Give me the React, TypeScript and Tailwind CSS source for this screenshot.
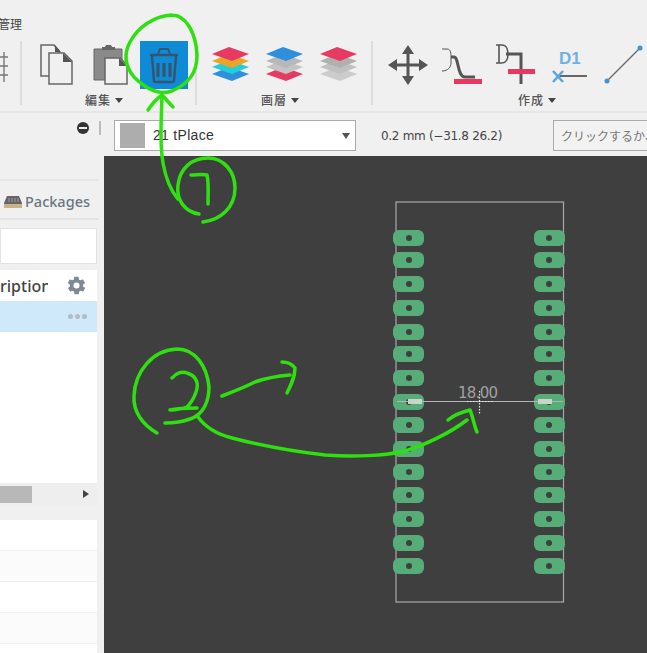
const GREEN = "#2ee00f"

const padRows = [238, 260, 284, 308, 332, 354, 378, 402, 425, 449, 472, 495, 519, 543, 566]

function Caret() {
  return <span className="ml-1 inline-block w-0 h-0 border-x-[4px] border-x-transparent border-t-[5px] border-t-[#444] align-middle" />
}

function RibbonLabel({ text, pl }: { text: string; pl: string }) {
  return (
    <div className={`${pl} flex items-center h-[22px] text-[12px] font-medium tracking-[1px] text-[#555]`}>
      {text}
      <Caret />
    </div>
  )
}

function Copy() {
  return (
    <svg width="34" height="42" viewBox="40 44 34 42" className="ml-[18px]">
      <path d="M41 45h13l5 6v25H41z" fill="#f0f0f0" stroke="#666" strokeWidth="1.5" />
      <path d="M55 45l6 7h-6z" fill="#555" />
      <path d="M49 53h15l8 8v23H49z" fill="#f0f0f0" stroke="#666" strokeWidth="1.5" />
      <path d="M63 53l9 9h-9z" fill="#555" />
    </svg>
  )
}

function Paste() {
  return (
    <svg width="36" height="42" viewBox="93 44 36 42" className="ml-[19px]">
      <path d="M94 49h28v31H94z" fill="#8a8a8a" stroke="#666" />
      <path d="M102 50v-3h3l1-2h5l1 2h3v3z" fill="#666" />
      <path d="M105 58h15l7 7v19h-22z" fill="#f0f0f0" stroke="#666" strokeWidth="1.5" />
      <path d="M119 58l8 8h-8z" fill="#555" />
    </svg>
  )
}

function Trash() {
  return (
    <div className="ml-[11px] w-[48px] h-[48px] bg-[#0f8bd6] flex items-center justify-center">
      <svg width="32" height="38" viewBox="148 45 32 38">
        <g stroke="#35546f" fill="none" strokeWidth="2">
          <path d="M150 54h28" strokeWidth="2.5" />
          <path d="M158 53l2-5h8l2 5" />
          <path d="M152 55l2 25a2 2 0 0 0 2 1h16a2 2 0 0 0 2-1l2-25" strokeWidth="2.5" />
          <path d="M158 62v14M164 62v14M170 62v14" strokeWidth="3" />
        </g>
      </svg>
    </div>
  )
}

function LayerStack({ colors, ml }: { colors: string[]; ml: string }) {
  // drawn bottom first, top layer is the first colour
  const offs = [0, 7, 13, 20]
  return (
    <svg width="40" height="40" viewBox="0 0 40 40" className={ml}>
      {colors.map((_, i) => {
        const j = colors.length - 1 - i
        const y = offs[j]
        return <path key={j} d={`M1 ${y + 9}L18 ${y + 2}L38 ${y + 9}L21 ${y + 16}z`} fill={colors[j]} />
      })}
    </svg>
  )
}

function Move() {
  return (
    <svg width="42" height="42" viewBox="386 44 42 42" className="ml-[14px]">
      <path d="M407 49v32M391 65h32" stroke="#555" strokeWidth="3" />
      <path d="M407 45l6 9h-12zM407 85l6-9h-12zM387 65l9-6v12zM427 65l-9-6v12z" fill="#555" />
    </svg>
  )
}

function Fanout() {
  return (
    <svg width="44" height="44" viewBox="439 44 44 44" className="ml-[11px]">
      <path d="M441 50h5c4 0 4 5 4 8v6c0 4-3 8-9 8" fill="none" stroke="#555" strokeWidth="1" />
      <path d="M450 58h3c5 0 3 20 11 20h10" fill="none" stroke="#555" strokeWidth="3" />
      <rect x="453" y="80" width="28" height="5" fill="#e8385f" />
    </svg>
  )
}

function DimBend() {
  return (
    <svg width="44" height="44" viewBox="493 44 44 44" className="ml-[10px]">
      <path d="M495 46h6c4 0 6 4 6 9s-2 9-6 9h-6M498 46v18" fill="none" stroke="#555" strokeWidth="1.6" />
      <path d="M505 55h15v30" fill="none" stroke="#555" strokeWidth="3" />
      <rect x="507" y="70" width="27" height="5" fill="#e8385f" />
    </svg>
  )
}

function Dimension() {
  return (
    <div className="relative ml-[13px] w-[38px] h-[42px]">
      <span className="absolute left-[8px] top-[6px] text-[17px] leading-[18px] font-bold text-[#6fb0e4] font-['Liberation_Sans',sans-serif]">D1</span>
      <svg width="38" height="42" viewBox="549 44 38 42" className="absolute left-0 top-0">
        <path d="M556 76h29" stroke="#666" strokeWidth="2" />
        <path d="M551 71l10 11M561 71l-10 11" stroke="#5aa5de" strokeWidth="2.5" />
      </svg>
    </div>
  )
}

function LineTool() {
  return (
    <svg width="40" height="42" viewBox="602 44 40 42" className="ml-[15px]">
      <path d="M605 81L638 48" stroke="#666" strokeWidth="1.3" />
      <circle cx="605" cy="81" r="2.5" fill="#3e93d8" />
      <circle cx="638" cy="48" r="2.5" fill="#3e93d8" />
    </svg>
  )
}

function Toolbar() {
  return (
    <div className="h-[113px] bg-[#f0f0f0] border-b-2 border-[#e6e6e6] shrink-0 overflow-hidden">
      <div className="h-[41px] relative">
        <span className="absolute left-[-2px] top-[15px] text-[12px] leading-[18px] text-[#444]">管理</span>
        <span className="absolute left-[472px] top-[-14px] w-[52px] h-[16px] overflow-hidden text-[11px] leading-[16px] text-[#555]">ビュー</span>
      </div>
      <div className="flex h-[70px]">
        <div className="w-[22px] h-[64px] border-r-2 border-[#dcdcdc] shrink-0 overflow-hidden">
          <svg width="10" height="42" viewBox="0 0 10 42" className="mt-[3px]">
            <path d="M0 13h8M0 22h8M0 31h8M4 8v30" stroke="#777" strokeWidth="1.4" />
          </svg>
        </div>
        <div className="w-[175px] h-[64px] border-r-2 border-[#dcdcdc] shrink-0">
          <div className="flex items-center h-[48px]">
            <Copy />
            <Paste />
            <Trash />
          </div>
          <RibbonLabel text="編集" pl="pl-[63px]" />
        </div>
        <div className="w-[176px] h-[64px] border-r-2 border-[#dcdcdc] shrink-0">
          <div className="flex items-center h-[48px]">
            <LayerStack ml="ml-[14px]" colors={["#e63a62", "#e8a52a", "#22cfd8", "#2e8fdc"]} />
            <LayerStack ml="ml-[14px]" colors={["#2e8fdc", "#b8b8b8", "#c4c4c4", "#e63a62"]} />
            <LayerStack ml="ml-[14px]" colors={["#e63a62", "#b0b0b0", "#c0c0c0", "#cccccc"]} />
          </div>
          <RibbonLabel text="画層" pl="pl-[64px]" />
        </div>
        <div className="flex-1 h-[64px]">
          <div className="flex items-center h-[48px]">
            <Move />
            <Fanout />
            <DimBend />
            <Dimension />
            <LineTool />
          </div>
          <RibbonLabel text="作成" pl="pl-[145px]" />
        </div>
      </div>
    </div>
  )
}

function Sidebar() {
  return (
    <div className="w-[104px] shrink-0 bg-[#f0f0f0] relative overflow-hidden">
      <div className="h-[68px] border-b-2 border-[#e6e6e6] mr-[5px] flex items-start justify-end pt-[9px] pr-[10px]">
        <span className="w-[12px] h-[12px] rounded-full bg-[#333] flex items-center justify-center">
          <span className="w-[8px] h-[2px] bg-[#eee]" />
        </span>
        <span className="absolute left-[99px] top-[8px] w-[2px] h-[14px] bg-[#bbb]" />
      </div>
      <div className="h-[39px] border-b-2 border-[#e4e4e4] mr-[5px] flex items-center pt-[4px] pl-[4px] gap-[3px]">
        <svg width="18" height="13" viewBox="0 0 18 13">
          <path d="M3 1h12l3 7v5H0V8z" fill="#666" />
          <path d="M0 9h18v4H0z" fill="#c9b48a" />
          <path d="M5 3v4M8 3v4M11 3v4M14 3v4" stroke="#999" />
        </svg>
        <span className="text-[14.5px] font-medium text-[#6a7580] font-['Noto_Sans',sans-serif]">Packages</span>
      </div>
      <div className="mt-[8px] w-[97px] h-[36px] bg-white border border-[#e2e2e2]" />
      <div className="mt-[6px] w-[97px] bg-white">
        <div className="h-[31px] flex items-center justify-between overflow-hidden">
          <span className="text-[16px] font-medium text-[#444] w-[48px] overflow-hidden whitespace-nowrap font-['Noto_Sans',sans-serif]">ription</span>
          <svg width="21" height="21" viewBox="0 0 24 24" className="mr-[10px]">
            <path
              fill="#7d8a96"
              d="M19.4 13c.1-.3.1-.7.1-1s0-.7-.1-1l2.1-1.6c.2-.2.2-.4.1-.6l-2-3.5c-.1-.2-.4-.3-.6-.2l-2.5 1c-.5-.4-1.1-.7-1.7-1l-.4-2.6c0-.3-.2-.5-.5-.5h-4c-.2 0-.5.2-.5.4l-.4 2.7c-.6.2-1.1.6-1.7 1l-2.5-1c-.2-.1-.5 0-.6.2l-2 3.5c-.1.2-.1.4.1.6L4.6 11c-.1.3-.1.7-.1 1s0 .7.1 1l-2.1 1.6c-.2.2-.2.4-.1.6l2 3.5c.1.2.4.3.6.2l2.5-1c.5.4 1.1.7 1.7 1l.4 2.6c0 .3.2.5.5.5h4c.2 0 .5-.2.5-.4l.4-2.7c.6-.2 1.1-.6 1.7-1l2.5 1c.2.1.5 0 .6-.2l2-3.5c.1-.2.1-.4-.1-.6zM12 15.5a3.5 3.5 0 1 1 0-7 3.5 3.5 0 0 1 0 7z"
            />
          </svg>
        </div>
        <div className="h-[31px] bg-[#cfe8fa] flex items-center justify-end gap-[2px] pr-[10px]">
          <span className="w-[5px] h-[5px] rounded-full bg-[#b4bcc4]" />
          <span className="w-[5px] h-[5px] rounded-full bg-[#b4bcc4]" />
          <span className="w-[5px] h-[5px] rounded-full bg-[#b4bcc4]" />
        </div>
        <div className="h-[151px]" />
      </div>
      <div className="w-[97px] h-[22px] bg-[#eeeeee] flex items-center justify-between">
        <div className="w-[32px] h-[17px] bg-[#b8b8b8]" />
        <span className="mr-[8px] w-0 h-0 border-y-[4px] border-y-transparent border-l-[6px] border-l-[#444]" />
      </div>
      <div className="h-[15px] w-[97px] bg-[#f0f0f0]" />
      <div className="w-[97px] bg-white">
        <div className="h-[31px] border-b border-[#f0f0f0]" />
        <div className="h-[31px] border-b border-[#f0f0f0] bg-[#fbfbfb]" />
        <div className="h-[31px] border-b border-[#f0f0f0]" />
        <div className="h-[31px] border-b border-[#f0f0f0] bg-[#fbfbfb]" />
        <div className="h-[10px]" />
      </div>
    </div>
  )
}

function LayerBar() {
  return (
    <div className="h-[43px] bg-[#f0f0f0] shrink-0 flex items-center pt-[2px] pl-[10px] overflow-hidden">
      <div className="w-[242px] h-[31px] bg-white border border-[#aaa] flex items-center pl-[5px] pr-[5px] shrink-0">
        <span className="w-[25px] h-[25px] bg-[#adadad] shrink-0" />
        <span className="ml-[8px] flex-1 text-[14px] text-[#333] font-['Liberation_Sans',sans-serif] tracking-[0.3px]">21 tPlace</span>
        <span className="w-0 h-0 border-x-[4px] border-x-transparent border-t-[6px] border-t-[#555]" />
      </div>
      <span className="ml-[25px] w-[172px] shrink-0 text-[12px] text-[#444] font-['DejaVu_Sans',sans-serif] tracking-[-0.3px] whitespace-nowrap">0.2 mm (−31.8 26.2)</span>
      <div className="w-[120px] h-[31px] shrink-0 bg-[#f2f2f2] border border-[#aaa] pl-[7px] flex items-center text-[12px] text-[#777] whitespace-nowrap overflow-hidden">
        クリックするか、S
      </div>
    </div>
  )
}

function Board() {
  return (
    <svg viewBox="104 156 543 497" className="block w-full h-full">
      <rect x="396" y="202" width="167.5" height="400" fill="none" stroke="#a8a8a8" strokeWidth="1.2" />
      {padRows.map((y) => (
        <g key={y}>
          <rect x="393" y={y - 8} width="31" height="16" rx="6" fill="#57ad78" />
          <rect x="534" y={y - 8} width="31" height="16" rx="6" fill="#57ad78" />
          <circle cx="409" cy={y} r="3" fill="#3f3f3f" />
          <circle cx="549" cy={y} r="3" fill="#3f3f3f" />
        </g>
      ))}
      <path d="M397 401.5H563" stroke="#b4b4b4" strokeWidth="1.2" />
      <path d="M408 401.5h14M538 401.5h14" stroke="#c8d4cc" strokeWidth="5" />
      <text x="458" y="398" fontSize="15" fill="#a0a0a0" fontFamily="'DejaVu Sans', sans-serif" textLength="40">18.00</text>
      <path d="M467 401.5h27M479.5 391v23" stroke="#e8e8e8" strokeWidth="1.2" strokeDasharray="1.5 1.5" />
    </svg>
  )
}

function Annotations() {
  return (
    <svg width="647" height="653" viewBox="0 0 647 653" className="absolute left-0 top-0 pointer-events-none">
      <g fill="none" stroke={GREEN} strokeWidth="3.5" strokeLinecap="round" strokeLinejoin="round">
        {/* 1 */}
        <path d="M172 15C186 15 196 33 197 55C197 72 190 83 172 91C158 96 145 88 134 77C125 66 123 55 130 42C138 27 154 16 172 15" />
        <path d="M162 96C161 125 160 145 163 163C166 180 172 192 178 199" />
        <path d="M148 110C152 104 156 99 162 95C166 99 169 103 173 107" />
        <path d="M199 214C185 212 176 200 178 185C180 168 192 158 208 158C224 158 235 172 235 188C235 208 220 220 203 222" />
        <path d="M191 175C197 175 202 174 207 175C209 184 208 195 208 204" />
        {/* 2 */}
        <path d="M157 433C143 425 133 412 134 396C135 372 152 350 177 349C195 349 207 366 209 387C209 402 203 415 190 419C182 422 173 423 165 423" />
        <path d="M172 378C176 373 182 371 187 373C197 376 199 384 196 392C194 398 191 403 187 407C182 409 175 410 170 410C178 408 188 408 197 408" />
        <path d="M222 396C235 391 245 387 255 382C266 378 278 376 290 375" />
        <path d="M282 362C287 362 292 364 295 368C295 377 291 385 287 393" />
        <path d="M198 417C206 428 216 434 232 438C255 444 290 451 325 455C352 457 385 456 405 451C425 445 450 433 467 420" />
        <path d="M448 420C454 415 462 412 470 410C473 417 474 425 477 432" />
      </g>
    </svg>
  )
}

export default function App() {
  return (
    <div className="relative w-[647px] h-[653px] overflow-hidden flex flex-col bg-[#f0f0f0] font-['Noto_Sans_CJK_JP',sans-serif]">
      <Toolbar />
      <div className="flex flex-1 min-h-0">
        <Sidebar />
        <div className="flex-1 flex flex-col min-w-0">
          <LayerBar />
          <div className="flex-1 bg-[#3f3f3f] min-h-0">
            <Board />
          </div>
        </div>
      </div>
      <Annotations />
    </div>
  )
}
